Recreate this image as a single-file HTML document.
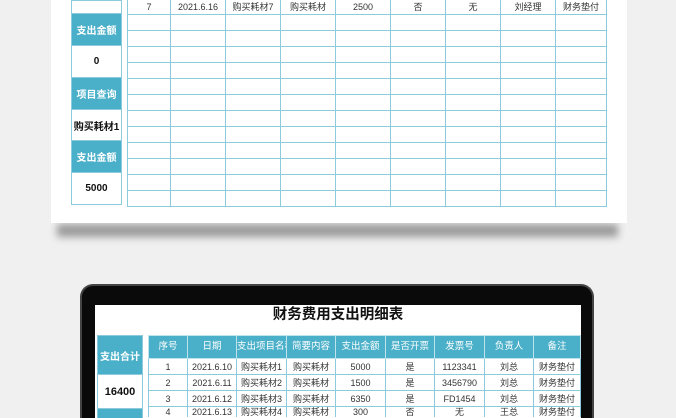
<!DOCTYPE html><html style="width:676px;height:418px;overflow:hidden"><head><meta charset="utf-8"><style>
*{margin:0;padding:0;box-sizing:border-box}
body{width:676px;height:418px;overflow:hidden;background:#f0f0f0;position:relative;font-family:"Liberation Sans","Noto Sans CJK SC",sans-serif}
.a{position:absolute}
table{position:absolute;border-collapse:collapse;table-layout:fixed}
td{border:1px solid #8ccbdc;height:16px;font-size:9px;text-align:center;color:#333;white-space:nowrap;overflow:hidden;line-height:14px}
.h td{background:#4aafc8;color:#fff;font-size:9.5px;height:23px;border-color:#bfe3ec}
.last td{height:10px;line-height:10px;vertical-align:top;border-bottom:none}
.lc{position:absolute;border:1px solid #8ccbdc;text-align:center;font-weight:bold;font-size:10px;display:flex;align-items:center;justify-content:center}
.t{background:#4aafc8;color:#fff}
.w{background:#fff;color:#111}
</style></head><body>
<div class="a" style="left:57px;top:224px;width:561px;height:13px;background:#9a9a9a;filter:blur(4px)"></div>
<div class="a" style="left:51px;top:0;width:576px;height:223px;background:#fff"></div>
<div class="lc w" style="left:71px;top:0;width:51px;height:14px"></div>
<div class="lc t" style="left:71px;top:13px;width:51px;height:33px">支出金额</div>
<div class="lc w" style="left:71px;top:45px;width:51px;height:33px">0</div>
<div class="lc t" style="left:71px;top:77px;width:51px;height:33px">项目查询</div>
<div class="lc w" style="left:71px;top:109px;width:51px;height:32px">购买耗材1</div>
<div class="lc t" style="left:71px;top:140px;width:51px;height:33px">支出金额</div>
<div class="lc w" style="left:71px;top:172px;width:51px;height:33px">5000</div>
<table style="left:127px;top:-2px;width:479px">
<colgroup><col style="width:43px"><col style="width:55px"><col style="width:55px"><col style="width:55px"><col style="width:55px"><col style="width:55px"><col style="width:55px"><col style="width:55px"><col style="width:51px"></colgroup>
<tr><td>7</td><td>2021.6.16</td><td>购买耗材7</td><td>购买耗材</td><td>2500</td><td>否</td><td>无</td><td>刘经理</td><td>财务垫付</td></tr>
<tr><td></td><td></td><td></td><td></td><td></td><td></td><td></td><td></td><td></td></tr>
<tr><td></td><td></td><td></td><td></td><td></td><td></td><td></td><td></td><td></td></tr>
<tr><td></td><td></td><td></td><td></td><td></td><td></td><td></td><td></td><td></td></tr>
<tr><td></td><td></td><td></td><td></td><td></td><td></td><td></td><td></td><td></td></tr>
<tr><td></td><td></td><td></td><td></td><td></td><td></td><td></td><td></td><td></td></tr>
<tr><td></td><td></td><td></td><td></td><td></td><td></td><td></td><td></td><td></td></tr>
<tr><td></td><td></td><td></td><td></td><td></td><td></td><td></td><td></td><td></td></tr>
<tr><td></td><td></td><td></td><td></td><td></td><td></td><td></td><td></td><td></td></tr>
<tr><td></td><td></td><td></td><td></td><td></td><td></td><td></td><td></td><td></td></tr>
<tr><td></td><td></td><td></td><td></td><td></td><td></td><td></td><td></td><td></td></tr>
<tr><td></td><td></td><td></td><td></td><td></td><td></td><td></td><td></td><td></td></tr>
<tr><td></td><td></td><td></td><td></td><td></td><td></td><td></td><td></td><td></td></tr>
</table>
<div class="a" style="left:80px;top:284px;width:514px;height:134px;background:#0a0a0a;border-radius:13px 13px 0 0;border:2px solid #444;border-bottom:none"></div>
<div class="a" style="left:95px;top:305px;width:486px;height:113px;background:#fff"></div>
<div class="a" style="left:95px;top:305px;width:486px;text-align:center;font-size:14.5px;font-weight:bold;color:#111;line-height:20px">财务费用支出明细表</div>
<div class="lc t" style="left:97px;top:335px;width:46px;height:40px">支出合计</div>
<div class="lc w" style="left:97px;top:374px;width:46px;height:35px;font-size:11px">16400</div>
<div class="lc t" style="left:97px;top:408px;width:46px;height:10px;border-bottom:none"></div>
<table style="left:148px;top:335px;width:432px">
<colgroup><col style="width:39px"><col style="width:49px"><col style="width:50px"><col style="width:49px"><col style="width:50px"><col style="width:49px"><col style="width:50px"><col style="width:49px"><col style="width:47px"></colgroup>
<tr class="h"><td>序号</td><td>日期</td><td>支出项目名称</td><td>简要内容</td><td>支出金额</td><td>是否开票</td><td>发票号</td><td>负责人</td><td>备注</td></tr>
<tr><td>1</td><td>2021.6.10</td><td>购买耗材1</td><td>购买耗材</td><td>5000</td><td>是</td><td>1123341</td><td>刘总</td><td>财务垫付</td></tr>
<tr><td>2</td><td>2021.6.11</td><td>购买耗材2</td><td>购买耗材</td><td>1500</td><td>是</td><td>3456790</td><td>刘总</td><td>财务垫付</td></tr>
<tr><td>3</td><td>2021.6.12</td><td>购买耗材3</td><td>购买耗材</td><td>6350</td><td>是</td><td>FD1454</td><td>刘总</td><td>财务垫付</td></tr>
<tr class="last"><td>4</td><td>2021.6.13</td><td>购买耗材4</td><td>购买耗材</td><td>300</td><td>否</td><td>无</td><td>王总</td><td>财务垫付</td></tr>
</table>
</body></html>
